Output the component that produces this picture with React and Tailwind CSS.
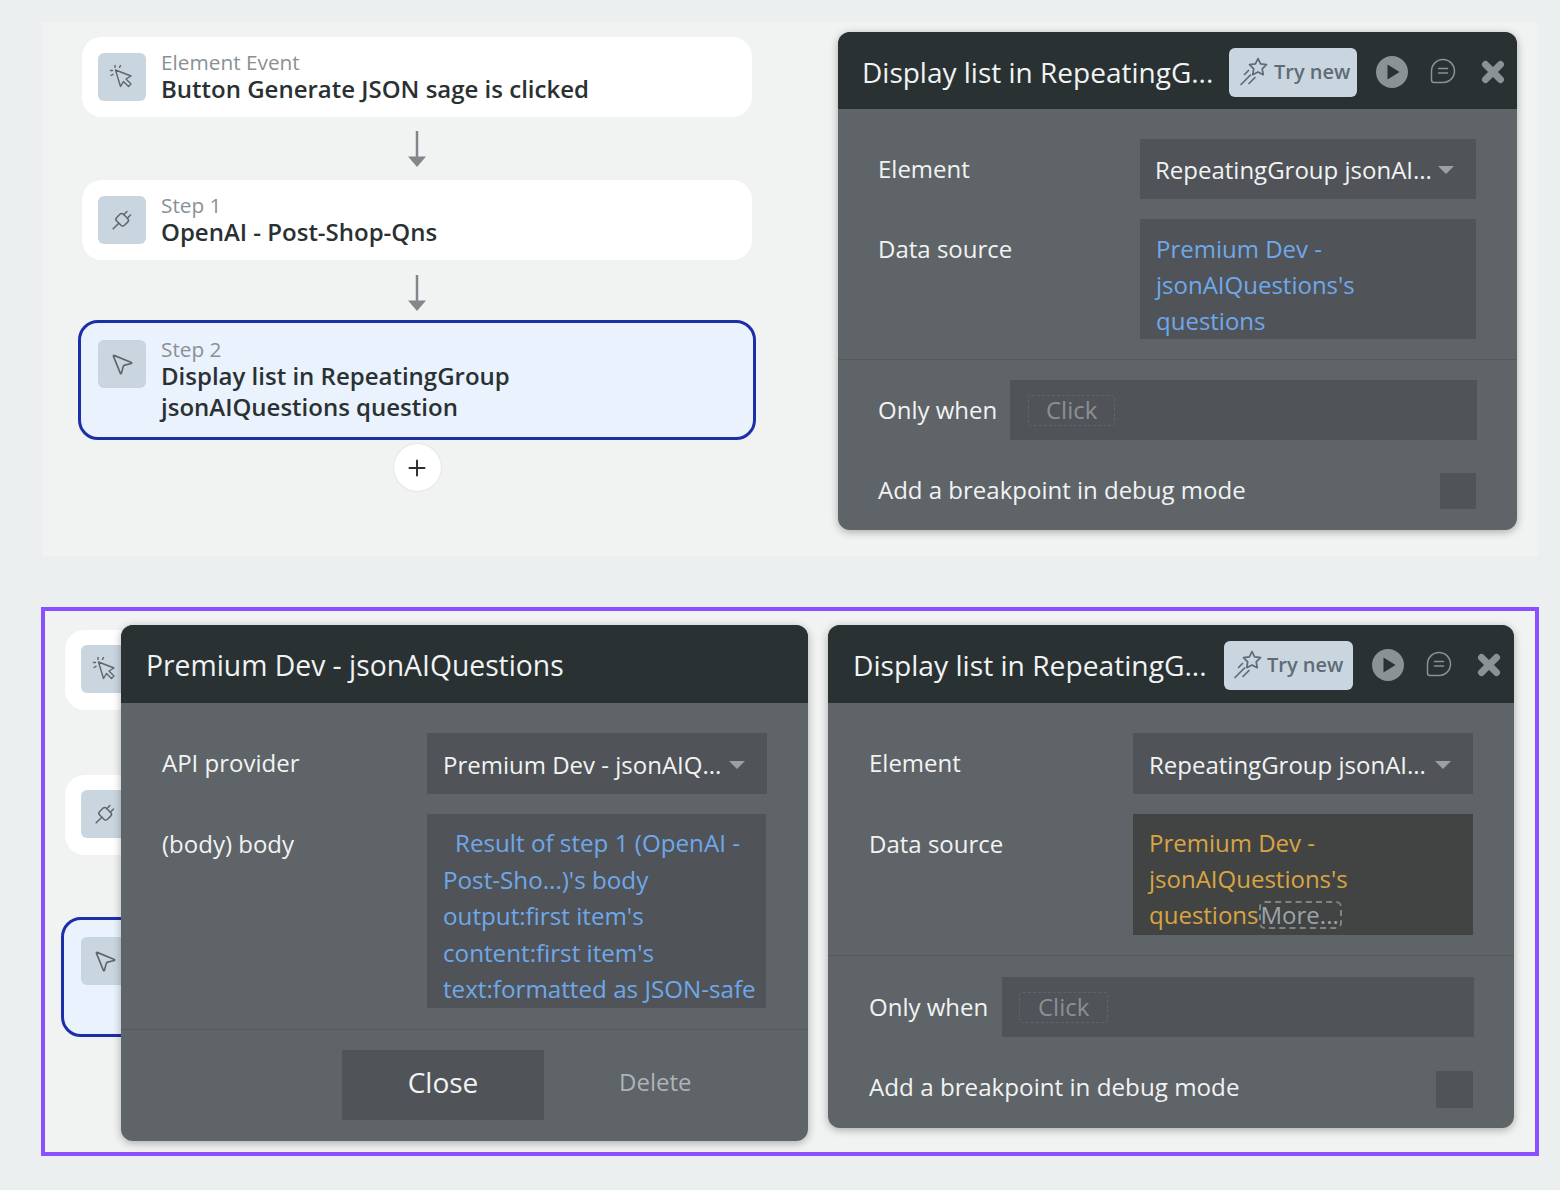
import { MousePointer2, Plus } from "lucide-react";

function ClickIcon() {
  return (
    <svg width="26" height="26" viewBox="0 0 26 26" fill="none" stroke="#5f666b" strokeWidth="1.400" strokeLinecap="round" strokeLinejoin="round">
      <path d="M6.500 6l15.500 6-5 3 5 5-2.500 2.500-5-5-3 5z" />
      <path d="M1.500 6.500h2" />
      <path d="M2 11.500l2-1.200" />
      <path d="M6 1.500v2" />
      <path d="M11.500 1.500l-1 1.800" />
    </svg>
  );
}

function PlugIcon() {
  return (
    <svg width="26" height="26" viewBox="0 0 26 26" fill="none" stroke="#5f666b" strokeWidth="1.500" strokeLinecap="round" strokeLinejoin="round">
      <g transform="rotate(45 13 13)">
        <rect x="7.500" y="8" width="11" height="9.500" rx="2.500" />
        <path d="M10.500 8v-4.500" />
        <path d="M15.500 8v-4.500" />
        <path d="M13 17.500v8" />
      </g>
    </svg>
  );
}

function StarIcon() {
  return (
    <svg width="32" height="32" viewBox="0 0 32 32" fill="none" stroke="#5f6b75" strokeWidth="1.700" strokeLinecap="round" strokeLinejoin="round">
      <path d="M20 2.500l2.600 5.400 5.900 .8-4.300 4.100 1 5.900-5.200-2.800-5.300 2.800 1-5.900-4.200-4.100 5.900-.8z" />
      <path d="M10.500 14.500l-4 4" />
      <path d="M12.500 19l-9.500 9.500" />
      <path d="M17 21.500l-6 6" />
    </svg>
  );
}

function PlayIcon() {
  return (
    <svg width="32" height="32" viewBox="0 0 32 32">
      <circle cx="16" cy="16" r="16" fill="#8b9195" />
      <path d="M11.500 8.500l12 7.500-12 7.500z" fill="#2a3133" />
    </svg>
  );
}

function CommentIcon() {
  return (
    <svg width="26" height="26" viewBox="0 0 26 26" fill="none" stroke="#8b9195" strokeWidth="1.500" strokeLinecap="round" strokeLinejoin="round">
      <path d="M13 1.500a11.500 11.500 0 1 1 0 23h-9a2.500 2.500 0 0 1-2.500-2.500v-9a11.500 11.500 0 0 1 11.500-11.500z" />
      <path d="M8.500 10.500h9" />
      <path d="M8.500 15h9" />
    </svg>
  );
}

function CloseIcon() {
  return (
    <svg width="24" height="24" viewBox="0 0 24 24" fill="none" stroke="#8b9195" strokeWidth="7" strokeLinecap="round">
      <path d="M4.500 4.500l15 15" />
      <path d="M19.500 4.500l-15 15" />
    </svg>
  );
}

function Arrow() {
  return (
    <svg width="20" height="36" viewBox="0 0 20 36" fill="#81878b" className="block">
      <rect x="8.750" y="0" width="2.500" height="28" />
      <path d="M1 25.500h18l-9 10.500z" />
    </svg>
  );
}

function StepIcon({ children }) {
  return (
    <div className="w-[48px] h-[48px] shrink-0 rounded-[6px] bg-[#c9d6e0] flex items-center justify-center">
      {children}
    </div>
  );
}

function StepCard({ icon, label, title }) {
  return (
    <div className="w-full h-[80px] rounded-[20px] bg-white flex pl-[16px] pt-[16px] gap-[15px]">
      <StepIcon>{icon}</StepIcon>
      <div className="-mt-[1px]">
        <div className="text-[20.800px] leading-[21px] text-[#8a9094]">{label}</div>
        <div className="text-[24px] leading-[31px] font-semibold text-[#2a3133]">{title}</div>
      </div>
    </div>
  );
}

const sendIcon = <MousePointer2 size={26} strokeWidth={1.5} color="#5f666b" />;

function Tools({ wide }) {
  return (
    <div className="ml-auto flex items-center">
      <div className={wide ? "h-[49px] w-[129px] rounded-[6px] bg-[#c9d6e0] flex items-center pl-[8px] gap-[3px] text-[20px] font-semibold text-[#5f6b75]" : "h-[49px] w-[128px] rounded-[6px] bg-[#c9d6e0] flex items-center pl-[9px] gap-[4px] text-[20px] font-semibold text-[#5f6b75]"}>
        <StarIcon />
        Try new
      </div>
      <div className="ml-[19px]"><PlayIcon /></div>
      <div className="ml-[22px] -mt-[3px]"><CommentIcon /></div>
      <div className="ml-[25px]"><CloseIcon /></div>
    </div>
  );
}

function Select({ value, tall }) {
  return (
    <div className={tall ? "h-[61px] w-full bg-[#505458] flex items-center pl-[16px] pt-[2px] text-[24px] text-[#f1f3f3] whitespace-nowrap" : "h-[60px] w-full bg-[#505458] flex items-center pl-[15px] pt-[2px] text-[24px] text-[#f1f3f3] whitespace-nowrap"}>
      {value}
      <span className="ml-auto mr-[22px] w-0 h-0 border-x-[8px] border-x-transparent border-t-[8px] border-t-[#9aa0a4]" />
    </div>
  );
}

function TopPanel() {
  return (
    <div className="h-full flex flex-col rounded-[12px] bg-[#5f6468] shadow-[0_2px_8px_rgba(0,0,0,0.3)] overflow-hidden">
      <div className="h-[77px] bg-[#2a3133] flex items-center pl-[24px] pr-[12px] pt-[3px] shrink-0">
        <div className="text-[28px] text-[#f1f3f3] whitespace-nowrap">Display list in RepeatingG...</div>
        <Tools />
      </div>
      <div className="flex pl-[40px] pr-[41px] pt-[30px]">
        <div className="w-[262px] text-[24px] leading-[60px] text-[#f1f3f3]">Element</div>
        <div className="flex-1"><Select value="RepeatingGroup jsonAI..." /></div>
      </div>
      <div className="flex pl-[40px] pr-[41px] pt-[20px]">
        <div className="w-[262px] text-[24px] leading-[60px] text-[#f1f3f3]">Data source</div>
        <div className="flex-1 h-[120px] bg-[#505458] pl-[16px] pt-[12px] text-[24px] leading-[36px] text-[#6fa8ea] overflow-hidden">
          Premium Dev -<br />jsonAIQuestions's<br />questions
        </div>
      </div>
      <div className="mt-[20px] h-[1px] bg-[#54595c]" />
      <div className="flex items-center pl-[40px] pr-[40px] pt-[20px]">
        <div className="w-[132px] text-[24px] text-[#f1f3f3] whitespace-nowrap">Only when</div>
        <div className="flex-1 h-[60px] bg-[#505458] flex items-center pl-[18px]">
          <span className="h-[31px] px-[17px] border border-dashed border-[#5f6468] rounded-[4px] text-[24px] leading-[28px] text-[#8a9094]">Click</span>
        </div>
      </div>
      <div className="flex items-center justify-between pl-[40px] pr-[41px] pt-[33px]">
        <div className="-mt-[2px] text-[24px] text-[#f1f3f3]">Add a breakpoint in debug mode</div>
        <div className="w-[36px] h-[36px] bg-[#505458]" />
      </div>
    </div>
  );
}

function BottomPanel() {
  return (
    <div className="h-full flex flex-col rounded-[12px] bg-[#5f6468] shadow-[0_2px_8px_rgba(0,0,0,0.3)] overflow-hidden">
      <div className="h-[78px] bg-[#2a3133] flex items-center pl-[25px] pr-[13px] pt-[2px] shrink-0">
        <div className="text-[28.200px] text-[#f1f3f3] whitespace-nowrap">Display list in RepeatingG...</div>
        <Tools wide />
      </div>
      <div className="flex px-[41px] pt-[30px]">
        <div className="w-[264px] text-[24px] leading-[60px] text-[#f1f3f3]">Element</div>
        <div className="flex-1"><Select value="RepeatingGroup jsonAI..." tall /></div>
      </div>
      <div className="flex px-[41px] pt-[20px]">
        <div className="w-[264px] text-[24px] leading-[60px] text-[#f1f3f3]">Data source</div>
        <div className="flex-1 h-[121px] bg-[#424444] pl-[16px] pt-[11px] text-[24px] leading-[36px] text-[#d9a441] overflow-hidden">
          Premium Dev -<br />jsonAIQuestions's<br />questions
          <span className="border-2 border-dashed border-[#7d8488] rounded-[6px] text-[#9aa3aa] pr-[1px] leading-[24px] inline-block">More...</span>
        </div>
      </div>
      <div className="mt-[20px] h-[1px] bg-[#54595c]" />
      <div className="flex items-center pl-[41px] pr-[40px] pt-[21px]">
        <div className="w-[133px] text-[24px] text-[#f1f3f3] whitespace-nowrap">Only when</div>
        <div className="flex-1 h-[60px] bg-[#505458] flex items-center pl-[17px]">
          <span className="h-[31px] px-[18px] border border-dashed border-[#5f6468] rounded-[4px] text-[24px] leading-[28px] text-[#8a9094]">Click</span>
        </div>
      </div>
      <div className="flex items-center justify-between px-[41px] pt-[34px]">
        <div className="-mt-[5px] text-[24.200px] text-[#f1f3f3]">Add a breakpoint in debug mode</div>
        <div className="w-[37px] h-[37px] bg-[#505458]" />
      </div>
    </div>
  );
}

function ApiPanel() {
  return (
    <div className="h-full flex flex-col rounded-[12px] bg-[#5f6468] shadow-[0_2px_8px_rgba(0,0,0,0.3)] overflow-hidden">
      <div className="h-[78px] bg-[#2a3133] flex items-center pl-[25px] pt-[2px] shrink-0">
        <div className="text-[28.300px] text-[#f1f3f3] whitespace-nowrap">Premium Dev - jsonAIQuestions</div>
      </div>
      <div className="flex pl-[41px] pr-[41px] pt-[30px]">
        <div className="w-[265px] text-[24px] leading-[60px] text-[#f1f3f3]">API provider</div>
        <div className="flex-1"><Select value="Premium Dev - jsonAIQ..." tall /></div>
      </div>
      <div className="flex pl-[41px] pr-[42px] pt-[20px]">
        <div className="w-[265px] text-[24px] leading-[60px] text-[#f1f3f3]">(body) body</div>
        <div className="flex-1 h-[194px] bg-[#505458] pl-[16px] pt-[11px] text-[24.200px] leading-[36.500px] text-[#6fa8ea] whitespace-nowrap overflow-hidden">
          <span className="pl-[12px]">Result of step 1 (OpenAI -</span><br />
          Post-Sho...)'s body<br />
          output:first item's<br />
          content:first item's<br />
          text:formatted as JSON-safe
        </div>
      </div>
      <div className="mt-[21px] h-[1px] bg-[#54595c]" />
      <div className="flex items-center pl-[221px] pt-[20px]">
        <div className="w-[202px] h-[70px] bg-[#505458] flex items-center justify-center pb-[6px] text-[28px] text-[#f1f3f3]">Close</div>
        <div className="ml-[75px] pb-[6px] text-[24px] text-[#aeb3b6]">Delete</div>
      </div>
    </div>
  );
}

export default function App() {
  return (
    <div className="w-[1560px] h-[1190px] overflow-hidden bg-[#ebeff0] pt-[22px] pl-[41px] font-['Open_Sans',sans-serif]">
      <div className="ml-[1px] w-[1496px] h-[534px] bg-[#f1f3f3] flex pl-[40px] pt-[10px]">
        <div className="w-[670px] flex flex-col items-center pt-[5px]">
          <StepCard icon={<ClickIcon />} label="Element Event" title="Button Generate JSON sage is clicked" />
          <div className="mt-[14px] mb-[13px] h-[36px]"><Arrow /></div>
          <StepCard icon={<PlugIcon />} label="Step 1" title="OpenAI - Post-Shop-Qns" />
          <div className="mt-[15px] mb-[9px] h-[36px]"><Arrow /></div>
          <div className="w-[678px] h-[120px] shrink-0 rounded-[20px] border-[3px] border-[#1c2fa8] bg-[#eaf2fe] flex pl-[17px] pt-[17px] gap-[15px]">
            <StepIcon>{sendIcon}</StepIcon>
            <div className="-mt-[1px]">
              <div className="text-[20.800px] leading-[21px] text-[#8a9094]">Step 2</div>
              <div className="text-[24px] leading-[31px] font-semibold text-[#2a3133] whitespace-nowrap">Display list in RepeatingGroup<br />jsonAIQuestions question</div>
            </div>
          </div>
          <div className="mt-[4px] w-[47px] h-[47px] rounded-full bg-white shadow-[0_0_2px_rgba(0,0,0,0.15)] flex items-center justify-center">
            <Plus size={26} strokeWidth={1.8} color="#2a3133" />
          </div>
        </div>
        <div className="ml-[86px] w-[679px] h-[498px]"><TopPanel /></div>
      </div>

      <div className="mt-[51px] w-[1498px] h-[549px] border-[4px] border-[#8a4fff] bg-[#f1f3f3] flex pl-[16px]">
        <div className="w-[60px] shrink-0 pt-[19px]">
          <div className="w-[120px] ml-[4px] h-[80px] rounded-[20px] bg-white pl-[16px] pt-[15px]"><StepIcon><ClickIcon /></StepIcon></div>
          <div className="w-[120px] ml-[4px] mt-[65px] h-[80px] rounded-[20px] bg-white pl-[16px] pt-[15px]"><StepIcon><PlugIcon /></StepIcon></div>
          <div className="w-[120px] mt-[62px] h-[120px] rounded-[20px] border-[3px] border-[#1c2fa8] bg-[#eaf2fe] pl-[17px] pt-[17px]"><StepIcon>{sendIcon}</StepIcon></div>
        </div>
        <div className="relative z-10 mt-[14px] w-[687px] h-[516px] shrink-0"><ApiPanel /></div>
        <div className="relative z-10 mt-[14px] ml-[20px] w-[686px] h-[503px] shrink-0"><BottomPanel /></div>
      </div>
    </div>
  );
}
